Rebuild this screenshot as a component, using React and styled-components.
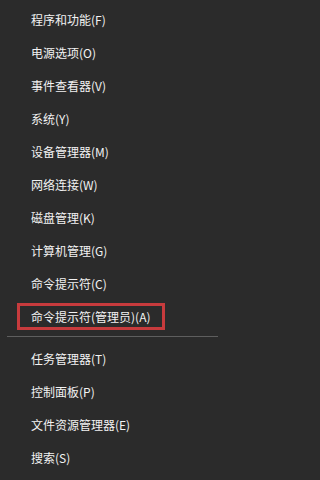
import React from 'react';
import styled, { createGlobalStyle } from 'styled-components';

const GlobalStyle = createGlobalStyle`
  html, body {
    margin: 0;
    padding: 0;
    background: #2b2b2b;
  }
`;

const Menu = styled.div`
  width: 225px;
  height: 480px;
  box-sizing: border-box;
  padding-top: 3px;
  background: #2b2b2b;
  font-family: "Noto Sans CJK SC", "Noto Sans", sans-serif;
  font-size: 12px;
  color: #f2f2f2;
  overflow: hidden;
`;

const Item = styled.div`
  height: 33px;
  display: flex;
  align-items: center;
  padding-left: 31px;
`;

const Label = styled.span`
  display: inline-flex;
  align-items: center;
  line-height: 1;
  white-space: nowrap;
  ${props => props.highlighted && `
    height: 27px;
    box-sizing: border-box;
    margin-left: -14px;
    padding: 0 11px;
    border: 3px solid #c73b3d;
  `}
`;

const Separator = styled.div`
  height: 1px;
  margin: 3px 7px 5px 7px;
  background: #5e5e5e;
`;

const groups = [
  [
    { text: '程序和功能(F)' },
    { text: '电源选项(O)' },
    { text: '事件查看器(V)' },
    { text: '系统(Y)' },
    { text: '设备管理器(M)' },
    { text: '网络连接(W)' },
    { text: '磁盘管理(K)' },
    { text: '计算机管理(G)' },
    { text: '命令提示符(C)' },
    { text: '命令提示符(管理员)(A)', highlighted: true },
  ],
  [
    { text: '任务管理器(T)' },
    { text: '控制面板(P)' },
    { text: '文件资源管理器(E)' },
    { text: '搜索(S)' },
  ],
];

export default function App() {
  return (
    <>
      <GlobalStyle />
      <Menu>
        {groups.map((group, i) => (
          <React.Fragment key={i}>
            {i > 0 && <Separator />}
            {group.map(item => (
              <Item key={item.text}>
                <Label highlighted={item.highlighted}>{item.text}</Label>
              </Item>
            ))}
          </React.Fragment>
        ))}
      </Menu>
    </>
  );
}
